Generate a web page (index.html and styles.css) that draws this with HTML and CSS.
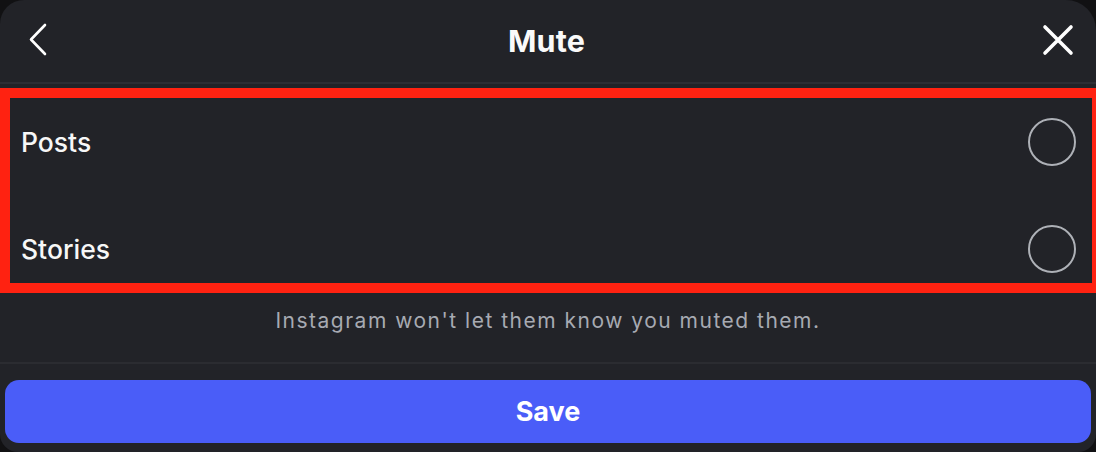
FILE: index.html
```html
<!DOCTYPE html>
<html lang="en">
<head>
<meta charset="utf-8">
<title>Mute</title>
<link rel="stylesheet" href="styles.css">
</head>
<body>
<div class="dialog">
  <header class="header">
    <button class="icon-btn back" aria-label="Back">
      <svg width="24" height="34" viewBox="0 0 24 34"><polyline points="17,2 3,16.5 17,31" fill="none" stroke="#fff" stroke-width="2.6" stroke-linecap="round" stroke-linejoin="round"/></svg>
    </button>
    <h1 class="title">Mute</h1>
    <button class="icon-btn close" aria-label="Close">
      <svg width="34" height="34" viewBox="0 0 34 34"><path d="M4 4 L30 30 M30 4 L4 30" fill="none" stroke="#fff" stroke-width="3.6" stroke-linecap="round"/></svg>
    </button>
  </header>
  <div class="options">
    <div class="row"><span class="label">Posts</span><span class="radio"></span></div>
    <div class="row"><span class="label">Stories</span><span class="radio"></span></div>
    <div class="highlight"></div>
  </div>
  <p class="note">Instagram won't let them know you muted them.</p>
  <div class="footer">
    <button class="save">Save</button>
  </div>
</div>
</body>
</html>
```

FILE: styles.css
```css
* { box-sizing: border-box; }
html, body {
  margin: 0;
  padding: 0;
  background: #111113;
  width: 1096px;
  height: 452px;
  overflow: hidden;
}
body {
  font-family: Inter, "Noto Sans", "Liberation Sans", sans-serif;
  color: #f5f5f5;
}
.dialog {
  width: 1096px;
  height: 452px;
  background: #222328;
  border-radius: 24px 30px 18px 18px;
  overflow: hidden;
  display: flex;
  flex-direction: column;
  position: relative;
}
.header {
  height: 84px;
  flex: none;
  display: flex;
  align-items: center;
  justify-content: space-between;
  padding: 0 21px 2px 24px;
  border-bottom: 2px solid #2d2e34;
}
.icon-btn {
  background: none;
  border: 0;
  padding: 0;
  display: flex;
  align-items: center;
  cursor: pointer;
}
.back { margin-left: 4px; }
.title {
  margin: 0;
  font-size: 30.5px;
  font-weight: 700;
  color: #fafafa;
  letter-spacing: 0.2px;
}
.options {
  position: relative;
  padding-top: 4px;
  flex: none;
}
.row {
  height: 107px;
  display: flex;
  align-items: center;
  justify-content: space-between;
  padding: 0 20px 0 21px;
}
.label {
  font-size: 26.5px;
  font-weight: 500;
  color: #f7f7f7;
}
.radio {
  width: 48px;
  height: 48px;
  border-radius: 50%;
  border: 2px solid #aeb1b7;
}
.highlight {
  position: absolute;
  top: 4px;
  left: 0;
  right: -6px;
  height: 205px;
  border: 10px solid #ff2211;
  pointer-events: none;
}
.note {
  margin: 0;
  flex: none;
  height: 62px;
  padding-top: 6px;
  text-align: center;
  font-size: 21px;
  letter-spacing: 1.5px;
  color: #a7aab2;
  border-bottom: 2px solid #2b2c31;
}
.footer {
  padding: 16px 5px 0 5px;
}
.save {
  width: 100%;
  height: 63px;
  border: 0;
  border-radius: 14px;
  background: #4a5df8;
  color: #fff;
  font-family: Inter, "Noto Sans", "Liberation Sans", sans-serif;
  font-size: 27px;
  font-weight: 700;
  cursor: pointer;
}
```
